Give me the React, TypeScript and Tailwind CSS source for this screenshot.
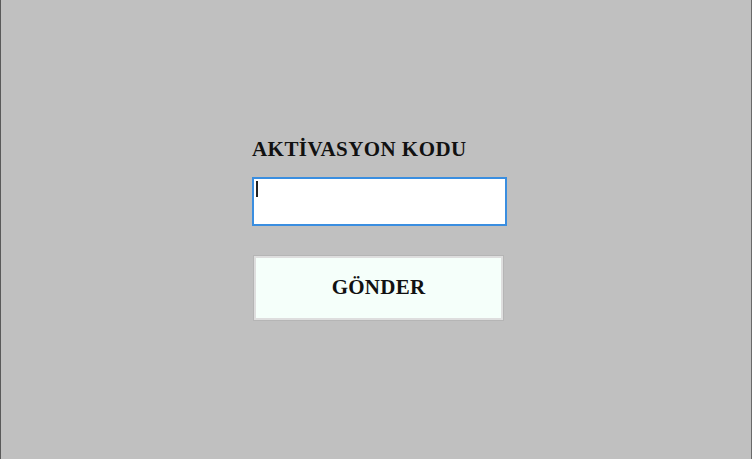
import React from "react";

const serif = { fontFamily: '"Liberation Serif", "Times New Roman", serif' };

export default function App() {
  return (
    <div
      className="w-full h-[459px] bg-[#c0c0c0] border-l border-l-[#5a5a5a] border-r border-r-[#6a6a6a] flex justify-center"
      style={serif}
    >
      <div className="w-[255px] pt-[137px] ml-[7px]">
        <div className="text-[21px] font-bold tracking-[0.45px] text-[#111] leading-[24px]">
          AKTİVASYON KODU
        </div>
        <div className="relative mt-[16px] h-[49px] border-2 border-[#3a8ee0] bg-white">
          <span className="absolute left-[2px] top-[2px] w-[2px] h-[16px] bg-[#222]" />
        </div>
        <button className="mt-[29px] ml-[1px] w-[251px] h-[66px] border border-[#b5b5b5] bg-[#f5fffa] shadow-[inset_0_0_0_2px_#dedede] text-[21px] font-bold tracking-[0.25px] text-[#111]">
          GÖNDER
        </button>
      </div>
    </div>
  );
}
